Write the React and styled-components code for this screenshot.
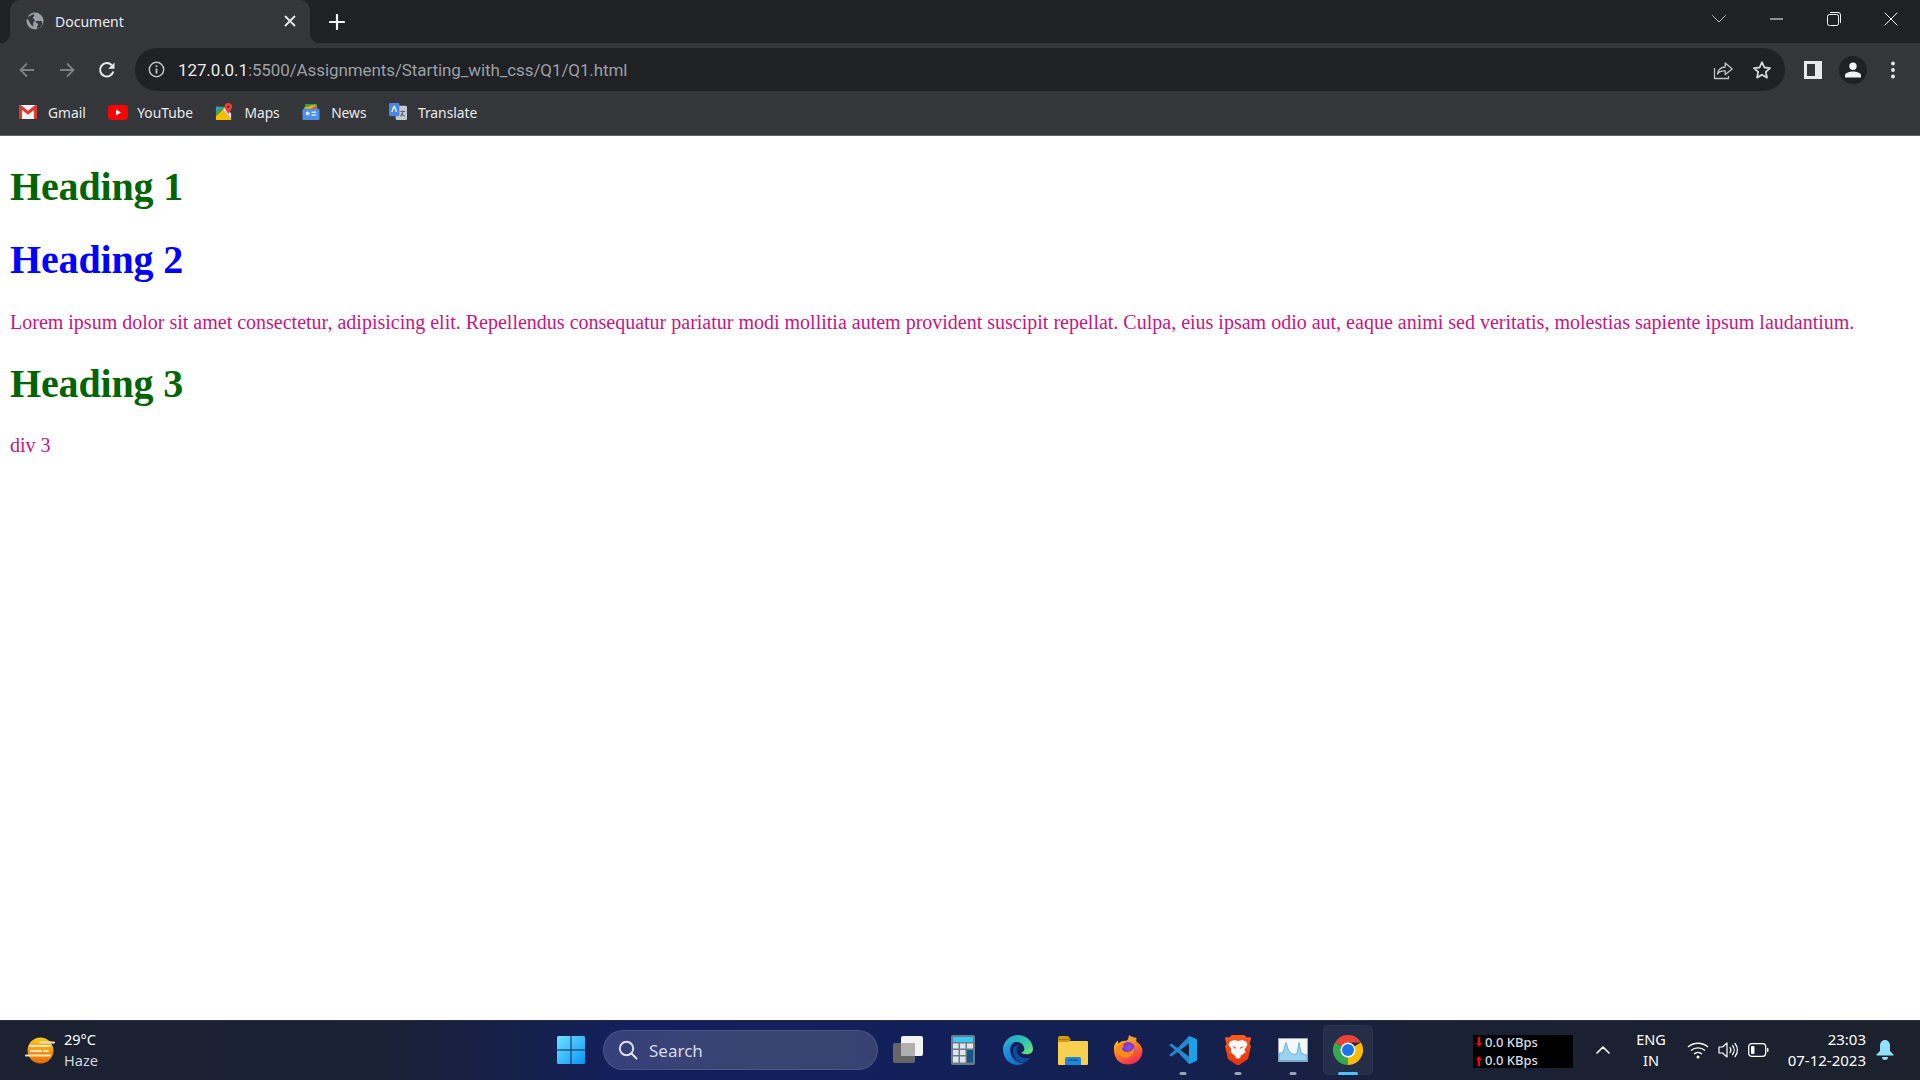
import React from "react";
import styled, { createGlobalStyle } from "styled-components";

const Global = createGlobalStyle`
  html, body { margin: 0; padding: 0; height: 100%; overflow: hidden; }
  #root { height: 100%; }
  * { box-sizing: border-box; }
`;

const uiFont = `"Noto Sans", "Open Sans", Arial, sans-serif`;

const Screen = styled.div`
  display: flex;
  flex-direction: column;
  width: 1920px;
  height: 1080px;
  background: #fff;
  font-family: ${uiFont};
`;

/* ---------- browser chrome ---------- */
const TabStrip = styled.div`
  display: flex;
  align-items: flex-end;
  height: 43px;
  padding-left: 10px;
  background: #202124;
`;
const Tab = styled.div`
  position: relative;
  display: flex;
  align-items: center;
  width: 300px;
  height: 43px;
  padding: 0 14px 1px 16px;
  background: #35363a;
  border-radius: 10px 10px 0 0;
  color: #e8eaed;
  font-size: 14px;
  &::before, &::after {
    content: "";
    position: absolute;
    bottom: 0;
    width: 10px;
    height: 10px;
  }
  &::before { left: -10px; background: radial-gradient(circle at 0 0, transparent 10px, #35363a 10.5px); }
  &::after { right: -10px; background: radial-gradient(circle at 100% 0, transparent 10px, #35363a 10.5px); }
`;
const TabTitle = styled.span`
  flex: 1;
  margin-left: 11px;
`;
const PlusSlot = styled.div`
  display: flex;
  align-items: center;
  justify-content: center;
  width: 36px;
  height: 43px;
  margin-left: 9px;
`;
const Spacer = styled.div`
  flex: 1;
`;
const WinButton = styled.div`
  display: flex;
  align-items: center;
  justify-content: center;
  width: 57.5px;
  height: 38px;
  align-self: flex-start;
`;
const Toolbar = styled.div`
  display: flex;
  align-items: center;
  height: 52px;
  padding: 5px 0 4px 7px;
  background: #35363a;
`;
const NavButton = styled.div`
  display: flex;
  align-items: center;
  justify-content: center;
  width: 40px;
  height: 40px;
  flex: none;
`;
const Omnibox = styled.div`
  display: flex;
  align-items: center;
  width: 1650px;
  height: 43px;
  margin: 0 8px 0 8px;
  padding: 0 4px 0 13px;
  background: #202124;
  border-radius: 22px;
`;
const UrlText = styled.div`
  flex: 1;
  margin-left: 13px;
  color: #9aa0a6;
  font-family: Roboto, "Noto Sans", sans-serif;
  font-size: 17px;
  letter-spacing: -0.1px;
  b { font-weight: 400; color: #e8eaed; }
`;
const OmniIcon = styled.div`
  display: flex;
  justify-content: center;
  width: 39px;
`;
const Avatar = styled.div`
  display: flex;
  align-items: center;
  justify-content: center;
  width: 28px;
  height: 28px;
  margin: 0 6px;
  border-radius: 50%;
  background: #202124;
`;
const BookmarkBar = styled.div`
  display: flex;
  align-items: center;
  gap: 22.4px;
  height: 41px;
  padding: 0 0 6px 19px;
  background: #35363a;
  border-bottom: 1px solid #5f6368;
`;
const Bookmark = styled.div`
  display: flex;
  align-items: center;
  gap: ${(p) => p.$gap}px;
  color: #e8eaed;
  font-size: 13.8px;
`;

/* ---------- page ---------- */
const Page = styled.main`
  flex: 1;
  padding: 1px 10px 0;
  overflow: hidden;
  font-family: "Liberation Serif", "Times New Roman", serif;
  font-size: 20px;
  line-height: 23px;
`;
const Heading = styled.h1`
  margin: 27.2px 0;
  font-size: 40px;
  line-height: 46px;
  font-weight: 700;
  letter-spacing: -0.15px;
  color: ${(p) => p.$color};
`;
const Body = styled.p`
  margin: 27.2px 0;
  color: #c71585;
  white-space: nowrap;
`;

/* ---------- taskbar ---------- */
const Taskbar = styled.footer`
  display: flex;
  align-items: center;
  height: 60px;
  flex: none;
  padding-bottom: 1px;
  border-top: 1px solid #2b2f3c;
  background: linear-gradient(90deg, #1b2130 0%, #1a2136 20%, #12205e 33%, #12205a 48%, #14204e 62%, #1a2136 74%, #1c212c 100%);
  color: #fff;
`;
const Weather = styled.div`
  display: flex;
  align-items: center;
  gap: 9px;
  width: 546px;
  padding-left: 25px;
`;
const TwoLines = styled.div`
  display: flex;
  flex-direction: column;
  font-size: 14.5px;
  line-height: 21px;
  text-align: ${(p) => p.$align || "left"};
`;
const Dim = styled.span`
  color: #d3d6dc;
`;
const Slot = styled.div`
  position: relative;
  display: flex;
  align-items: center;
  justify-content: center;
  width: 50px;
  height: 50px;
  flex: none;
  border-radius: 5px;
  ${(p) => p.$active && `background: rgba(255,255,255,.06); box-shadow: inset 0 0 0 1px rgba(255,255,255,.03);`}
  ${(p) => p.$dot && `
    &::after {
      content: "";
      position: absolute;
      left: 50%;
      bottom: 0;
      transform: translateX(-50%);
      width: ${p.$active ? 20 : 7}px;
      height: 3.5px;
      border-radius: 2px;
      background: ${p.$active ? "#4cc2ff" : "#9ca3af"};
    }
  `}
`;
const SearchBox = styled.div`
  display: flex;
  align-items: center;
  gap: 11px;
  width: 275px;
  height: 40px;
  margin: 0 5px 0 7px;
  padding-left: 14px;
  border-radius: 20px;
  border: 1px solid rgba(255,255,255,.1);
  background: linear-gradient(90deg, #36407a, #3a4470 60%, #384272);
  color: #d5d8e4;
  font-size: 17px;
`;
const Apps = styled.div`
  display: flex;
  gap: 5px;
  width: 590px;
`;
const Meter = styled.div`
  display: flex;
  flex-direction: column;
  justify-content: center;
  width: 100px;
  height: 33px;
  margin: 3px 5px 0 0;
  padding-left: 3px;
  background: #000;
  font-size: 13px;
  line-height: 17.5px;
  font-weight: 500;
  color: #d9dde6;
`;
const MeterRow = styled.div`
  display: flex;
  align-items: center;
  gap: 3px;
`;
const TrayIcon = styled.div`
  display: flex;
  justify-content: center;
  width: ${(p) => p.$w || 30}px;
  flex: none;
`;
const Clock = styled(TwoLines)`
  width: 90px;
  margin-left: 3px;
  font-size: 15px;
`;
const Lang = styled(TwoLines)`
  width: 40px;
  margin: 0 12px 0 3px;
`;

/* ---------- drawings ---------- */
const Svg = ({ s = 20, w, h, children, vb = "0 0 24 24", ...r }) => (
  <svg width={w || s} height={h || s} viewBox={vb} fill="none" {...r}>{children}</svg>
);
const Globe = () => (
  <Svg s={18} vb="0 0 18 18">
    <circle cx="9" cy="9" r="8.5" fill="#9aa0a6" />
    <path d="M3 4.5 7.5 2c.8 1 1 2-.2 3-.8.7-.6 1.500.4 2 1.600.7 1.400 2.200.100 2.700-.9.4-.9 2.300-.3 4.800-2-1-3.500-2.700-4-4.500-.5-1.500-1.400-2.800-3-3.500.2-.7.5-1.400 1-2ZM11 17l.5-3.500 1-1.500-2.500-1.500c-.8-.5-.6-1.500.5-1.500h5l.8 2.500c-.5 2.700-2.800 4.900-5.300 5.500Z" fill="#35363a" />
  </Svg>
);
const Line = ({ d, c = "#fff", sw = 2, s = 16, vb = "0 0 16 16", ...r }) => (
  <Svg s={s} vb={vb} {...r}><path d={d} stroke={c} strokeWidth={sw} strokeLinecap="round" strokeLinejoin="round" /></Svg>
);
const Arrow = ({ flip, c }) => (
  <Svg s={18} vb="0 0 18 18" style={flip ? { transform: "scaleX(-1)" } : undefined}>
    <path d="M16 9H3M9 2.500 2.500 9 9 15.500" stroke={c} strokeWidth="1.800" />
  </Svg>
);
const Reload = () => (
  <Svg s={20} vb="0 0 20 20">
    <path d="M16.300 11.500A6.700 6.700 0 1 1 14.700 5.200" stroke="#e8eaed" strokeWidth="2" />
    <path d="M17.500 2.500v6.300h-6.300z" fill="#e8eaed" />
  </Svg>
);
const Info = () => (
  <Svg s={17} vb="0 0 17 17">
    <circle cx="8.500" cy="8.500" r="7.200" stroke="#bdc1c6" strokeWidth="1.500" />
    <path d="M8.500 7.500v5M8.500 4.300v1.700" stroke="#bdc1c6" strokeWidth="1.800" />
  </Svg>
);
const Share = () => (
  <Svg s={20} vb="0 0 20 20">
    <path d="M1.500 8v10.500h14V16M4.500 14c.3-4 3.500-7 7.700-7V3l7 6-7 5.500V11c-3.400-.3-6 .6-7.700 3Z" stroke="#bdc1c6" strokeWidth="1.300" strokeLinejoin="round" />
  </Svg>
);
const Star = () => (
  <Svg s={20} vb="0 0 20 20">
    <path d="m10 2.200 2.400 5.300 5.700.6-4.300 3.800 1.200 5.700-5-2.900-5 2.900 1.200-5.700L1.900 8.100l5.700-.6Z" stroke="#d5d7da" strokeWidth="1.800" strokeLinejoin="round" />
  </Svg>
);
const SidePanel = () => (
  <Svg s={18} vb="0 0 18 18">
    <rect width="18" height="18" fill="#e8eaed" />
    <rect x="3" y="3" width="8" height="12" fill="#35363a" />
  </Svg>
);
const Person = () => (
  <Svg s={18} vb="0 0 18 18">
    <circle cx="9" cy="5.300" r="3.700" fill="#f1f3f4" />
    <path d="M1 16.500v-2c0-3 5-4 8-4s8 1 8 4v2Z" fill="#f1f3f4" />
  </Svg>
);
const Kebab = () => (
  <Svg w={6} h={18} vb="0 0 6 18">
    <circle cx="3" cy="2.500" r="1.900" fill="#e8eaed" />
    <circle cx="3" cy="9" r="1.900" fill="#e8eaed" />
    <circle cx="3" cy="15.500" r="1.900" fill="#e8eaed" />
  </Svg>
);
const GmailIcon = () => (
  <Svg s={18} vb="0 0 18 18">
    <rect y="2" width="18" height="14" rx="1.500" fill="#f1f1f1" />
    <path d="M0 3.500C0 2.500 1 1.700 2 2.200L9 7.800l7-5.600c1-.5 2 .3 2 1.300V16h-3V7L9 11.700 3 7v9H0Z" fill="#d93b30" />
  </Svg>
);
const YoutubeIcon = () => (
  <Svg w={20} h={15} vb="0 0 20 15">
    <rect width="20" height="15" rx="4" fill="#f00" />
    <path d="m8 4.500 5 3-5 3z" fill="#fff" />
  </Svg>
);
const MapsIcon = () => (
  <Svg s={18} vb="0 0 19 19">
    <path d="M1 4h10l-10 10z" fill="#34a853" />
    <path d="M1 14 8 7l9 10v1H1z" fill="#fbbc04" />
    <path d="M8 7 11 4l6 7v6z" fill="#dfe1e5" />
    <path d="M1 4h5L1 9z" fill="#4a8df0" />
    <path d="M14 0a4 4 0 0 1 4 4c0 2.500-2.500 4.500-4 8-1.500-3.500-4-5.500-4-8a4 4 0 0 1 4-4Z" fill="#e94335" />
    <circle cx="14" cy="4" r="1.400" fill="#8f1f17" />
  </Svg>
);
const NewsIcon = () => (
  <Svg s={18} vb="0 0 19 19">
    <rect x="3" y="1" width="13" height="8" rx="1" fill="#2f9e5b" />
    <path d="M2 5 14 1.500l2 5-12 3z" fill="#f4b400" />
    <path d="M14 3 17 7H8z" fill="#e9503f" />
    <rect x="0.500" y="6" width="18" height="12" rx="1.500" fill="#4a90e8" />
    <rect x="4" y="9" width="4" height="4" rx="2" fill="#dbe8fb" />
    <rect x="10" y="9" width="5" height="1.500" fill="#dbe8fb" />
    <rect x="10" y="12" width="5" height="1.500" fill="#dbe8fb" />
  </Svg>
);
const TranslateIcon = () => (
  <Svg s={18} vb="0 0 19 19">
    <rect x="7" y="3" width="12" height="15" rx="1.500" fill="#c6cad0" />
    <rect x="0" y="0" width="11" height="14" rx="1.500" fill="#4a86e8" />
    <path d="M3 9.500c1-3 1.500-4.500 2.500-6 1 1.500 1.500 3 2.500 6" stroke="#fff" strokeWidth="1.300" />
    <path d="M12 9h5M14.500 8v1.500c-.3 2-1 3.500-2.500 4.500m1-3c1 1.200 2 2.300 3.500 3" stroke="#5f6368" strokeWidth="1.200" />
  </Svg>
);
const SunHaze = () => (
  <Svg s={30} vb="0 0 30 30">
    <defs>
      <linearGradient id="sun" x1="0" x2="0" y1="0" y2="1">
        <stop offset="0" stopColor="#fdc81c" />
        <stop offset="1" stopColor="#ea6a06" />
      </linearGradient>
    </defs>
    <circle cx="15.500" cy="15.500" r="13" fill="url(#sun)" />
    <path d="M15 7.500h14M5 11h20M6 16h10M19 16h4M1 20.500h24" stroke="#f3e3bd" strokeWidth="2.200" strokeLinecap="round" />
  </Svg>
);
const WindowsLogo = () => (
  <Svg s={30} vb="0 0 30 30">
    <defs>
      <linearGradient id="win" x1="0" y1="0" x2="1" y2="1">
        <stop offset="0" stopColor="#6ee2ff" />
        <stop offset="1" stopColor="#0a95f5" />
      </linearGradient>
    </defs>
    <path d="M1 2.500A1.500 1.500 0 0 1 2.500 1h12v13.500H1ZM15.500 1h12A1.500 1.500 0 0 1 29 2.500v12H15.500ZM1 15.500h13.500V29h-12A1.500 1.500 0 0 1 1 27.500ZM15.500 15.500H29v12a1.500 1.500 0 0 1-1.500 1.500h-12Z" fill="url(#win)" />
  </Svg>
);
const SearchGlass = () => (
  <Svg s={20} vb="0 0 20 20">
    <circle cx="8.500" cy="8.500" r="6.700" stroke="#dfe2ea" strokeWidth="2" />
    <path d="m13.500 13.500 5 5" stroke="#dfe2ea" strokeWidth="2" strokeLinecap="round" />
  </Svg>
);
const TaskView = () => (
  <Svg s={32} vb="0 0 32 32">
    <rect x="1" y="9" width="22" height="20" rx="2" fill="#666" />
    <rect x="9" y="2" width="22" height="20" rx="2" fill="#f3f3f3" />
    <rect x="9" y="9" width="14" height="13" rx="1" fill="#b0b0b0" />
  </Svg>
);
const Calculator = () => (
  <Svg w={24} h={30} vb="0 0 24 30">
    <rect width="24" height="30" rx="2" fill="#6d7b88" />
    <rect x="2" y="2" width="20" height="5" fill="#3cc8f2" />
    <g fill="#dfe5ea">
      <rect x="2" y="8.500" width="5.500" height="5" /><rect x="9" y="8.500" width="5.500" height="5" /><rect x="16" y="8.500" width="6" height="5" />
      <rect x="2" y="15" width="5.500" height="5" /><rect x="9" y="15" width="5.500" height="5" />
      <rect x="2" y="21.500" width="5.500" height="6" /><rect x="9" y="21.500" width="5.500" height="6" />
    </g>
    <rect x="16" y="15" width="6" height="12.500" fill="#11558d" />
  </Svg>
);
const Edge = () => (
  <Svg s={30} vb="0 0 30 30">
    <defs>
      <linearGradient id="edgeTop" x1="0" y1="0" x2="1" y2="1">
        <stop offset="0" stopColor="#1a9fd8" />
        <stop offset=".6" stopColor="#36c9a8" />
        <stop offset="1" stopColor="#7fe36a" />
      </linearGradient>
      <linearGradient id="edgeBlue" x1="0" y1="0" x2="1" y2="1">
        <stop offset="0" stopColor="#2aa4e8" />
        <stop offset="1" stopColor="#0b62b5" />
      </linearGradient>
    </defs>
    <path d="M15 0C23.500 0 30 6.500 30 14c0 3.500-3 5.300-6.500 5.300-2.500 0-4.700-.8-5.300-1.700 2.500-.9 3.500-2.500 3-4.800C20.400 9.400 17.500 7 14 7 9 7 3 9 0 14 .5 6 7 0 15 0Z" fill="url(#edgeTop)" />
    <path d="M0 14c2-5 7-7.500 11.500-6.500C8 9 6.500 13 7.500 17.500 8.800 24 15.500 29 21 28.300 19 29.500 17 30 15 30 6 30 0 23 0 14Z" fill="url(#edgeBlue)" />
    <path d="M10.500 13.500c1-2.500 3.500-3.500 6-3-3 1.200-3.500 4.500-2.300 7.500 1.500 3.500 6 5.800 10 5.300 1.800-.2 3.300-.8 4.300-1.800-2.600 4.200-7 6.500-10.500 6-5-1-9.500-8-7.500-14Z" fill="#0c4f9e" />
  </Svg>
);
const Folder = () => (
  <Svg w={30} h={29} vb="0 0 30 29">
    <path d="M0 2a2 2 0 0 1 2-2h8l3 3.500H0Z" fill="#d99a0c" />
    <rect y="5" width="30" height="24" rx="1" fill="#f9cf4f" />
    <path d="M0 3.500h13L10.500 6H0Z" fill="#d99a0c" />
    <path d="M7 29v-6a2 2 0 0 1 2-2h12a2 2 0 0 1 2 2v6Z" fill="#1e87d8" />
    <rect x="10" y="23.500" width="10" height="1.500" fill="#0c5aa0" />
  </Svg>
);
const Firefox = () => (
  <Svg s={30} vb="0 0 30 30">
    <defs>
      <linearGradient id="ff" x1=".2" y1="0" x2=".7" y2="1">
        <stop offset="0" stopColor="#ffcb2e" />
        <stop offset=".5" stopColor="#ff7a22" />
        <stop offset="1" stopColor="#f0245a" />
      </linearGradient>
      <radialGradient id="ffc" cx=".55" cy=".4" r=".6">
        <stop offset="0" stopColor="#9a4ee6" />
        <stop offset="1" stopColor="#5a2bb0" />
      </radialGradient>
    </defs>
    <path d="M1 11C2 9 3 7 5 5.500c-.1 1.300 0 2.200.5 3C8 6 11 5.500 13 5.800c2-.5 2.500-2 3-5.800 1.500 2 5 2 8 3-1 1-1 2-.5 3.500 4 3 6 6 6 9 0 8-6 14-14.500 14S0 24 1 11Z" fill="url(#ff)" />
    <circle cx="15" cy="14" r="7" fill="url(#ffc)" />
    <path d="M4 13c2-4 6-6 10-5.500-2.500.5-4 1.500-4 3 2 .5 1 2-1 2.500 0 2 2 4 5 4 4 0 7-2.500 7-6 1.500 4 0 9-5 11-6 2-13-2-12-9Z" fill="#ff8a1f" />
  </Svg>
);
const VSCode = () => (
  <Svg s={30} vb="0 0 30 30">
    <path d="M21 1 9.500 13 3.500 8.500 1 10l6 5-6 5 2.500 1.500 6-4.500L21 29l8-3.500v-21z" fill="#2489ca" />
    <path d="M21 1v28l8-3.500v-21z" fill="#1ba1ea" />
    <path d="M21 8.500 12.500 15l8.500 6.500z" fill="#16203a" />
  </Svg>
);
const Brave = () => (
  <Svg w={26} h={30} vb="0 0 26 30">
    <defs>
      <linearGradient id="brv" x1="0" y1="0" x2="0" y2="1">
        <stop offset="0" stopColor="#ff5a1f" />
        <stop offset="1" stopColor="#e8320f" />
      </linearGradient>
    </defs>
    <path d="M7 0h12l3 2.500 3.500-.5L26 4l-1.500 5L26 11l-3 13-8 5.500a3 3 0 0 1-4 0L3 24 0 11l1.500-2L0 4l.5-2 3.500.5Z" fill="url(#brv)" />
    <path d="M5 6.500 9 5l4 1 4-1 4 1.500 1.500 3-3 5 1 2.500-3.500 3-2 1 1 1-3 2-3-2 1-1-2-1-3.500-3 1-2.500-3-5ZM7 11l4 1.500-.8 1.500zM19 11l-4 1.500.8 1.500z" fill="#fff" fillRule="evenodd" />
  </Svg>
);
const TaskMgr = () => (
  <Svg w={30} h={24} vb="0 0 30 24">
    <rect width="30" height="24" fill="#9aa3ae" />
    <rect x="1" y="1" width="28" height="21.500" fill="#f4f8fb" />
    <path d="M1 22.500v-7l4-1 3-10 2.500 8 3 3 2.500 1 3-1 2-11 2 10 3 2 3 .5v5.500Z" fill="#9dd3f2" stroke="#4da3dc" strokeWidth=".8" />
  </Svg>
);
const Chrome = () => (
  <Svg s={30} vb="0 0 30 30">
    <path d="M15 15 2 7.500A15 15 0 0 1 28 7.500H15Z" fill="#ea4335" />
    <path d="M15 15 28 7.500A15 15 0 0 1 15 30l-.2-.2z" fill="#fbbc04" />
    <path d="M15 15 15 30A15 15 0 0 1 2 7.500z" fill="#34a853" />
    <circle cx="15" cy="15" r="7.500" fill="#fff" />
    <circle cx="15" cy="15" r="6" fill="#1a73e8" />
  </Svg>
);
const MeterArrow = ({ up }) => (
  <Svg w={6} h={11} vb="0 0 6 11" style={up ? { transform: "scaleY(-1)" } : undefined}>
    <path d="M3 0v7" stroke="#f00" strokeWidth="2.200" />
    <path d="M0 6h6l-3 4z" fill="#f00" />
  </Svg>
);
const Wifi = () => (
  <Svg s={22} vb="0 0 22 22">
    <path d="M1 8c5.500-5 14.500-5 20 0M4 11.500c4-3.500 10-3.500 14 0M7 15c2.300-2 5.700-2 8 0" stroke="#fff" strokeWidth="1.300" />
    <circle cx="11" cy="18" r="1.500" fill="#fff" />
  </Svg>
);
const Speaker = () => (
  <Svg s={22} vb="0 0 22 22">
    <path d="M2 8h3.500L10 4v14l-4.500-4H2Z" stroke="#fff" strokeWidth="1.200" strokeLinejoin="round" />
    <path d="M13 8.500a4 4 0 0 1 0 5M15.500 6.500a7 7 0 0 1 0 9M18 4.500a10 10 0 0 1 0 13" stroke="#fff" strokeWidth="1.200" strokeLinecap="round" />
  </Svg>
);
const Battery = () => (
  <Svg w={21} h={14} vb="0 0 21 14">
    <rect x=".7" y=".7" width="17" height="12.600" rx="3" stroke="#fff" strokeWidth="1.300" />
    <rect x="3" y="3" width="3.500" height="8" rx="1" fill="#fff" />
    <path d="M19 5h.5a1 1 0 0 1 1 1v2a1 1 0 0 1-1 1H19Z" fill="#fff" />
  </Svg>
);
const Bell = () => (
  <Svg w={18} h={20} vb="0 0 18 20">
    <path d="M9 0c3.200 0 5 2.500 5 5.500V11l3.500 3.500v1H.5v-1L4 11V5.500C4 2.500 5.800 0 9 0Z" fill="#8fe0fa" />
    <path d="M6 17h6a3 3 0 0 1-6 0Z" fill="#8fe0fa" />
  </Svg>
);

const bookmarks = [
  ["Gmail", GmailIcon, 11],
  ["YouTube", YoutubeIcon, 9],
  ["Maps", MapsIcon, 11],
  ["News", NewsIcon, 11],
  ["Translate", TranslateIcon, 11],
];

const apps = [
  [TaskView], [Calculator], [Edge], [Folder], [Firefox],
  [VSCode, true], [Brave, true], [TaskMgr, true], [Chrome, true, true],
];

export default function App() {
  return (
    <Screen>
      <Global />
      <TabStrip>
        <Tab>
          <Globe />
          <TabTitle>Document</TabTitle>
          <Line s={12} vb="0 0 12 12" d="M1.500 1.500l9 9M10.500 1.500l-9 9" c="#e8eaed" sw={1.800} />
        </Tab>
        <PlusSlot><Line s={16} d="M8 1v14M1 8h14" sw={2.200} c="#f1f3f4" /></PlusSlot>
        <Spacer />
        <WinButton><Line s={14} vb="0 0 14 8" h={8} d="M.5.5 7 7l6.500-6.500" sw={.9} c="#c8c9cb" /></WinButton>
        <WinButton><Line s={13} vb="0 0 13 2" h={2} d="M0 1h13" sw={1} c="#fff" /></WinButton>
        <WinButton>
          <Svg s={14} vb="0 0 14 14">
            <rect x=".5" y="2.500" width="11" height="11" rx="2" stroke="#fff" />
            <path d="M3 .5h8a2.500 2.500 0 0 1 2.500 2.500v8" stroke="#fff" />
          </Svg>
        </WinButton>
        <WinButton><Line s={14} d="M1 1l12 12M13 1L1 13" vb="0 0 14 14" sw={1} c="#fff" /></WinButton>
      </TabStrip>

      <Toolbar>
        <NavButton><Arrow c="#7d8084" /></NavButton>
        <NavButton><Arrow flip c="#7d8084" /></NavButton>
        <NavButton><Reload /></NavButton>
        <Omnibox>
          <Info />
          <UrlText><b>127.0.0.1</b>:5500/Assignments/Starting_with_css/Q1/Q1.html</UrlText>
          <OmniIcon><Share /></OmniIcon>
          <OmniIcon><Star /></OmniIcon>
        </Omnibox>
        <NavButton><SidePanel /></NavButton>
        <Avatar><Person /></Avatar>
        <NavButton><Kebab /></NavButton>
      </Toolbar>

      <BookmarkBar>
        {bookmarks.map(([label, Icon, gap]) => (
          <Bookmark key={label} $gap={gap}><Icon />{label}</Bookmark>
        ))}
      </BookmarkBar>

      <Page>
        <Heading $color="#006400">Heading 1</Heading>
        <Heading $color="#0000ff">Heading 2</Heading>
        <Body>Lorem ipsum dolor sit amet consectetur, adipisicing elit. Repellendus consequatur pariatur modi mollitia autem provident suscipit repellat. Culpa, eius ipsam odio aut, eaque animi sed veritatis, molestias sapiente ipsum laudantium.</Body>
        <Heading $color="#006400">Heading 3</Heading>
        <Body>div 3</Body>
      </Page>

      <Taskbar>
        <Weather>
          <SunHaze />
          <TwoLines><span>29°C</span><Dim>Haze</Dim></TwoLines>
        </Weather>
        <Slot><WindowsLogo /></Slot>
        <SearchBox><SearchGlass />Search</SearchBox>
        <Apps>
          {apps.map(([Icon, dot, active], i) => (
            <Slot key={i} $dot={dot} $active={active}><Icon /></Slot>
          ))}
        </Apps>
        <Meter>
          <MeterRow><MeterArrow />0.0 KBps</MeterRow>
          <MeterRow><MeterArrow up />0.0 KBps</MeterRow>
        </Meter>
        <TrayIcon $w={50}><Line s={14} vb="0 0 14 8" h={8} d="M1 7l6-6 6 6" sw={1.600} c="#fff" /></TrayIcon>
        <Lang $align="center"><span>ENG</span><span>IN</span></Lang>
        <TrayIcon><Wifi /></TrayIcon>
        <TrayIcon><Speaker /></TrayIcon>
        <TrayIcon><Battery /></TrayIcon>
        <Clock $align="right"><span>23:03</span><span>07-12-2023</span></Clock>
        <TrayIcon $w={38}><Bell /></TrayIcon>
      </Taskbar>
    </Screen>
  );
}
